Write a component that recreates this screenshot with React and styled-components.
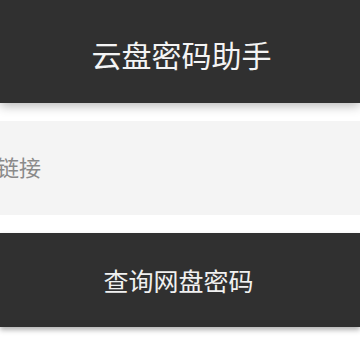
import React, { useState } from "react";
import styled, { createGlobalStyle } from "styled-components";

const GlobalStyle = createGlobalStyle`
  html, body {
    margin: 0;
    padding: 0;
    background: #ffffff;
    font-family: "Noto Sans CJK SC", "Liberation Sans", sans-serif;
  }
`;

const Page = styled.div`
  width: 360px;
  height: 360px;
  overflow: hidden;
  display: flex;
  flex-direction: column;
`;

const Header = styled.header`
  height: 103px;
  background: #303030;
  color: #f4f4f4;
  display: flex;
  align-items: center;
  justify-content: center;
  padding: 4px 0 0 3px;
  box-sizing: border-box;
  font-size: 30px;
  box-shadow: 0 3px 10px rgba(0, 0, 0, 0.28);
  position: relative;
  z-index: 1;
`;

const Field = styled.input`
  margin-top: 18px;
  height: 94px;
  box-sizing: border-box;
  border: none;
  outline: none;
  background: #f4f4f4;
  padding: 0 0 4px 0;
  text-indent: -3px;
  font-family: "Noto Sans CJK SC", "Liberation Sans", sans-serif;
  font-size: 22px;
  color: #333;
  &::placeholder {
    color: #8a8a8a;
  }
`;

const Button = styled.button`
  margin-top: 18px;
  height: 94px;
  border: none;
  background: #303030;
  color: #f0f0f0;
  font-family: "Noto Sans CJK SC", "Liberation Sans", sans-serif;
  font-size: 25px;
  padding-left: 3px;
  box-shadow: 0 3px 5px rgba(0, 0, 0, 0.3);
  cursor: pointer;
`;

export default function App() {
  const [link, setLink] = useState("");
  return (
    <>
      <GlobalStyle />
      <Page>
        <Header>云盘密码助手</Header>
        <Field
          value={link}
          onChange={(e) => setLink(e.target.value)}
          placeholder="链接"
        />
        <Button>查询网盘密码</Button>
      </Page>
    </>
  );
}
